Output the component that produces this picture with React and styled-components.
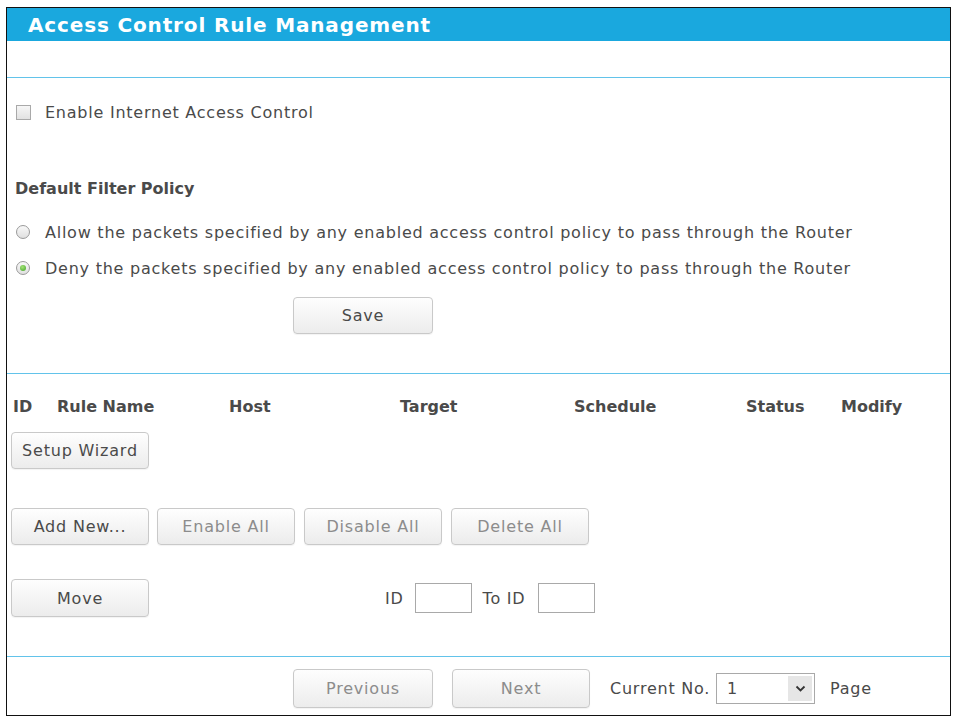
import React from "react";
import styled, { createGlobalStyle } from "styled-components";

const Global = createGlobalStyle`
  html, body { margin: 0; padding: 0; background: #fff; }
  body { font-family: "DejaVu Sans", Verdana, sans-serif; color: #4a4a4a; }
  * { box-sizing: border-box; }
`;

const Frame = styled.div`
  margin: 7px 0 0 6px;
  width: 945px;
  height: 709px;
  border: 1px solid #111;
  display: flex;
  flex-direction: column;
`;

const Header = styled.div`
  height: 33px;
  background: #1aa8de;
  color: #fff;
  font-weight: bold;
  font-size: 20px;
  letter-spacing: 0.85px;
  display: flex;
  align-items: center;
  padding-left: 21px;
`;

const Section = styled.div`
  display: flex;
  flex-direction: column;
  border-bottom: ${(p) => (p.$line ? "1px solid #62c3ea" : "none")};
  height: ${(p) => p.$h}px;
  padding-left: 4px;
`;

const Row = styled.div`
  display: flex;
  align-items: center;
  height: ${(p) => p.$h || 24}px;
  margin-top: ${(p) => p.$mt || 0}px;
  padding-left: ${(p) => p.$pl || 0}px;
  font-size: 16px;
  letter-spacing: 0.76px;
`;

const Title = styled.div`
  font-weight: bold;
  font-size: 16px;
  letter-spacing: 0;
  color: #4a4a4a;
`;

const Check = styled.span`
  width: 15px;
  height: 15px;
  border: 1px solid #a9a9a9;
  background: linear-gradient(#f6f6f6, #e2e2e2);
  margin-right: 14px;
  flex: none;
`;

const Radio = styled.span`
  position: relative;
  width: 14px;
  height: 14px;
  border-radius: 50%;
  border: 1px solid #9a9a9a;
  background: linear-gradient(#f8f8f8, #e0e0e0);
  margin-right: 15px;
  flex: none;
  &::after {
    content: "";
    display: ${(p) => (p.$on ? "block" : "none")};
    position: absolute;
    left: 3px;
    top: 3px;
    width: 6px;
    height: 6px;
    border-radius: 50%;
    background: radial-gradient(circle at 40% 35%, #a4e276, #3fa328);
  }
`;

const Label = styled.span`
  color: #4a4a4a;
  white-space: nowrap;
`;

const Button = styled.button`
  width: ${(p) => p.$w || 138}px;
  height: ${(p) => p.$h || 37}px;
  margin-left: ${(p) => p.$ml || 0}px;
  border: 1px solid #c9c9c9;
  border-radius: 4px;
  background: linear-gradient(#fefefe, #ececec);
  box-shadow: 0 1px 1px rgba(0, 0, 0, 0.05);
  font-family: "DejaVu Sans", Verdana, sans-serif;
  font-size: 16px;
  letter-spacing: 0.8px;
  color: ${(p) => (p.$dim ? "#8c8c8c" : "#4a4a4a")};
  padding: 0;
  flex: none;
`;

const HeadGrid = styled.div`
  display: grid;
  grid-template-columns: 44px 172px 171px 174px 172px 95px auto;
  align-items: center;
  height: 24px;
  margin-top: 20px;
  padding-left: 2px;
  font-size: 16px;
  font-weight: bold;
  color: #4a4a4a;
`;

const Spacer = styled.div`
  width: ${(p) => p.$w}px;
  flex: none;
`;

const Input = styled.input`
  width: ${(p) => p.$w || 57}px;
  height: 30px;
  border: 1px solid #a9a9a9;
  margin: 0 0 0 ${(p) => p.$ml || 0}px;
  padding: 0;
  flex: none;
`;

const SelectBox = styled.div`
  position: relative;
  width: 99px;
  height: 31px;
  border: 1px solid #a9a9a9;
  margin-left: 6px;
  margin-right: 15px;
  display: flex;
  align-items: center;
  padding-left: 10px;
  font-size: 16px;
  color: #4a4a4a;
`;

const Arrow = styled.span`
  position: absolute;
  right: 2px;
  top: 2px;
  bottom: 2px;
  width: 24px;
  background: #e6e6e6;
  display: flex;
  align-items: center;
  justify-content: center;
`;

export default function App() {
  return (
    <>
      <Global />
      <Frame>
        <Header>Access Control Rule Management</Header>
        <Section $line $h={37} />
        <Section $line $h={296}>
          <Row $mt={22} $pl={5}>
            <Check />
            <Label>Enable Internet Access Control</Label>
          </Row>
          <Row $mt={52} $pl={4}>
            <Title>Default Filter Policy</Title>
          </Row>
          <Row $mt={20} $pl={5}>
            <Radio />
            <Label>Allow the packets specified by any enabled access control policy to pass through the Router</Label>
          </Row>
          <Row $mt={12} $pl={5}>
            <Radio $on />
            <Label>Deny the packets specified by any enabled access control policy to pass through the Router</Label>
          </Row>
          <Row $mt={17} $h={37} $pl={282}>
            <Button $w={140}>Save</Button>
          </Row>
        </Section>
        <Section $line $h={283}>
          <HeadGrid>
            <span>ID</span>
            <span>Rule Name</span>
            <span>Host</span>
            <span>Target</span>
            <span>Schedule</span>
            <span>Status</span>
            <span>Modify</span>
          </HeadGrid>
          <Row $mt={14} $h={37}>
            <Button>Setup Wizard</Button>
          </Row>
          <Row $mt={39} $h={37}>
            <Button>Add New...</Button>
            <Button $ml={8} $dim>Enable All</Button>
            <Button $ml={9} $dim>Disable All</Button>
            <Button $ml={9} $dim>Delete All</Button>
          </Row>
          <Row $mt={34} $h={38}>
            <Button $h={38}>Move</Button>
            <Spacer $w={236} />
            <Label>ID</Label>
            <Input $ml={11} />
            <Spacer $w={11} />
            <Label>To ID</Label>
            <Input $ml={13} />
          </Row>
        </Section>
        <Section $h={50}>
          <Row $mt={12} $h={39} $pl={282}>
            <Button $w={140} $h={39} $dim>Previous</Button>
            <Button $ml={19} $h={39} $dim>Next</Button>
            <Spacer $w={20} />
            <Label>Current No.</Label>
            <SelectBox>
              1
              <Arrow>
                <svg width="11" height="8" viewBox="0 0 11 8">
                  <path d="M1.5 1.5 L5.5 5.5 L9.5 1.5" fill="none" stroke="#333" strokeWidth="1.8" />
                </svg>
              </Arrow>
            </SelectBox>
            <Label>Page</Label>
          </Row>
        </Section>
      </Frame>
    </>
  );
}
